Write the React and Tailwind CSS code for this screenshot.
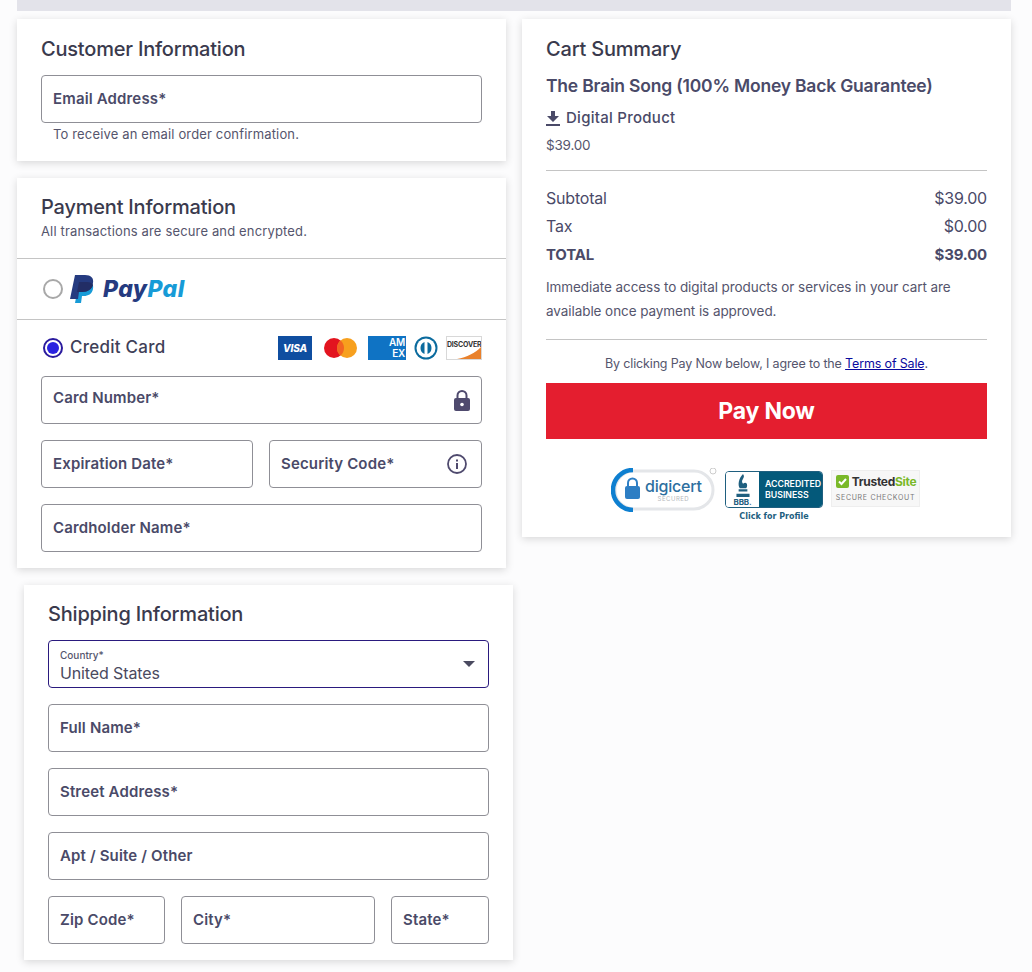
import React from 'react';

const Field = ({ label, className = '', labelClass = '', children }) => (
    <div className={`h-12 border border-[#8f8f96] rounded flex items-center justify-between px-[11px] ${className}`}>
        <span className={`text-[15px] font-semibold text-[#4a4a68] tracking-[0.15px] ${labelClass}`}>{label}</span>
        {children}
    </div>
);

const Radio = ({ checked }) => (
    checked ? (
        <span className="w-5 h-5 rounded-full border-2 border-[#2a1a9e] flex items-center justify-center">
            <span className="w-3 h-3 rounded-full bg-[#2a22e0]"></span>
        </span>
    ) : (
        <span className="w-5 h-5 rounded-full border-2 border-[#a8a8a8]"></span>
    )
);

const PaypalLogo = () => (
    <div className="flex items-center gap-[9px]">
        <svg width="24" height="28" viewBox="0 0 24 28">
            <path d="M9 7h8c4 0 7 2 6 7-1 5-5 7-9 7h-2l-1 7H5z" fill="#179bd7" />
            <path d="M5 0h10c6 0 9 3 8 8-1 6-5 9-11 9H9l-1 7H0z" fill="#253b80" />
            <path d="M9 7h8c3 0 5 1 6 3-1 4-5 7-11 7H7z" fill="#222d65" />
        </svg>
        <span className="text-[23px] font-extrabold italic leading-none tracking-[0.4px] mt-px">
            <span className="text-[#253b80]">Pay</span><span className="text-[#179bd7]">Pal</span>
        </span>
    </div>
);

const CardIcons = () => (
    <div className="flex items-center">
        <div className="w-[34px] h-6 bg-[#0f4ea0] flex items-center justify-center text-white text-[10px] font-extrabold italic">VISA</div>
        <svg className="ml-[11px]" width="35" height="24" viewBox="0 0 35 24">
            <circle cx="11" cy="12" r="10" fill="#e3141f" />
            <circle cx="24" cy="12" r="10" fill="#f7a01e" />
            <path d="M17.5 4.4a10 10 0 0 1 0 15.2a10 10 0 0 1 0-15.2z" fill="#f26522" />
        </svg>
        <div className="ml-[10px] w-[38px] h-6 bg-[#0f73c4] flex flex-col items-end justify-center pr-px text-white text-[10px] font-semibold leading-[11px]">
            <span>AM</span>
            <span>EX</span>
        </div>
        <svg className="ml-2" width="24" height="24" viewBox="0 0 24 24">
            <circle cx="12" cy="12" r="11.5" fill="#0b6b9e" />
            <circle cx="12" cy="12" r="9.500" fill="#fff" />
            <path d="M10.500 6v12a6.500 6.500 0 0 1 0-12zM13.500 6a6.500 6.500 0 0 1 0 12z" fill="#0b6b9e" />
        </svg>
        <div className="ml-2 w-9 h-6 border border-[#d8d8d8] relative overflow-hidden bg-white">
            <svg className="absolute inset-0" width="34" height="22" viewBox="0 0 34 22">
                <path d="M34 10V22H10C20 20 28 16 34 10z" fill="#e9812c" />
            </svg>
            <span className="relative block text-[7px] font-bold leading-[16px] text-center text-[#333]">DISCOVER</span>
        </div>
    </div>
);

const Digicert = () => (
    <div className="w-[106px] h-[44px] relative flex items-center">
        <svg className="absolute inset-0" width="106" height="44" viewBox="0 0 106 44">
            <rect x="4" y="3" width="98" height="38" rx="19" fill="#fff" stroke="#e4e6e9" strokeWidth="3" />
            <path d="M22 2A20 20 0 0 0 22 42" fill="none" stroke="#0e7fd0" strokeWidth="4.500" />
            <circle cx="102" cy="3" r="3" fill="none" stroke="#ccc" />
            <rect x="14" y="18" width="15" height="13" rx="2" fill="#2d7ec4" />
            <path d="M17 18v-3a4.500 4.500 0 0 1 9 0v3" fill="none" stroke="#2d7ec4" strokeWidth="2" />
        </svg>
        <div className="relative ml-[34px] flex flex-col items-center">
            <span className="text-[16px] leading-[17px] font-medium text-[#2d6f9f]">digicert</span>
            <span className="text-[6px] leading-[8px] text-[#b5b8bc] tracking-[0.5px]">SECURED</span>
        </div>
    </div>
);

const Bbb = () => (
    <div className="mt-[3px] flex flex-col items-center">
        <div className="w-[98px] h-[37px] rounded border border-[#1f5f7f] flex overflow-hidden">
            <div className="w-[33px] bg-white flex flex-col items-center justify-end text-[#1f5f7f]">
                <svg width="16" height="24" viewBox="0 0 14 22">
                    <path d="M7 0C10 4 4 5 7 9c3-3 5 1 3 4H4C2 10 3 4 7 0zM3 14h8v2H3zM1 18h12v3H1z" fill="#1f5f7f" />
                </svg>
                <span className="text-[8px] font-bold leading-[9px]">BBB.</span>
            </div>
            <div className="flex-1 bg-[#04597a] flex flex-col justify-center pl-[6px] text-white text-[8.750px] font-semibold leading-[11px] tracking-normal">
                <span>ACCREDITED</span>
                <span>BUSINESS</span>
            </div>
        </div>
        <span className="font-['DejaVu_Sans'] text-[8px] font-bold text-[#1f5f7f] leading-[18px] tracking-normal">Click for Profile</span>
    </div>
);

const TrustedSite = () => (
    <div className="mt-[2px] w-[89px] h-[37px] bg-[#f7f7f7] border border-[#eeeeee] flex flex-col items-center justify-center">
        <div className="flex items-center gap-[3px] pl-px">
            <svg width="13" height="13" viewBox="0 0 13 13">
                <rect width="13" height="13" rx="2" fill="#7ab929" />
                <path d="M3 6.500l2.500 2.500 4.500-5" fill="none" stroke="#fff" strokeWidth="2" />
            </svg>
            <span className="text-[12px] font-bold leading-[14px] text-[#333] tracking-[-0.3px]">Trusted<span className="text-[#7ab929]">Site</span></span>
        </div>
        <span className="text-[7px] leading-[10px] tracking-[0.7px] text-[#777] mt-[4px]">SECURE CHECKOUT</span>
    </div>
);

const Row = ({ label, value, bold }) => (
    <div className={`flex justify-between h-7 items-center text-[#4a4a68] ${bold ? 'text-[15px] font-bold' : 'text-[16px] pb-[2px]'}`}>
        <span>{label}</span>
        <span>{value}</span>
    </div>
);

export default function App() {
    return (
        <div className="w-[1032px] h-[972px] overflow-hidden bg-[#fcfcfd] px-[17px] text-[#4a4a68] font-['Inter','Noto_Sans',sans-serif] tracking-[-0.2px]">
            <div className="w-[994px] h-[11px] bg-[#e3e3ea]"></div>

            <div className="flex gap-4 mt-2 items-start">
                {/* left column */}
                <div className="w-[489px] shrink-0 flex flex-col gap-[17px]">
                    <div className="bg-white shadow-[0_2px_8px_rgba(0,0,0,0.15)] h-[142px] px-6 pt-[18px]">
                        <h2 className="text-[20px] leading-6 font-medium text-[#3a3a4d]">Customer Information</h2>
                        <Field label="Email Address*" className="mt-[14px]" />
                        <p className="ml-3 text-[13px] leading-[22px] text-[#55556d] tracking-[0.15px]">To receive an email order confirmation.</p>
                    </div>

                    <div className="bg-white shadow-[0_2px_8px_rgba(0,0,0,0.15)] h-[390px]">
                        <div className="h-[81px] px-6 pt-[17px] border-b border-[#c4c4c4]">
                            <h2 className="text-[20px] leading-6 font-medium text-[#3a3a4d]">Payment Information</h2>
                            <p className="text-[13px] leading-6 text-[#55556d] tracking-[0.15px]">All transactions are secure and encrypted.</p>
                        </div>
                        <div className="h-[61px] px-[26px] border-b border-[#c4c4c4] flex items-center gap-[7px]">
                            <Radio />
                            <PaypalLogo />
                        </div>
                        <div className="px-6">
                            <div className="h-[56px] flex items-center justify-between">
                                <div className="flex items-center gap-[7px] pl-[2px]">
                                    <Radio checked />
                                    <span className="text-[17px] font-medium text-[#3f3f58] tracking-[0.25px]">Credit Card</span>
                                </div>
                                <CardIcons />
                            </div>
                            <div className="flex flex-col gap-4">
                                <Field label="Card Number*" labelClass="-mt-1">
                                    <svg width="16" height="21" viewBox="0 0 16 21">
                                        <path d="M3.500 8V5.500a4.500 4.500 0 0 1 9 0V8" fill="none" stroke="#4f4a6e" strokeWidth="2" />
                                        <rect y="8" width="16" height="13" rx="2" fill="#4f4a6e" />
                                        <circle cx="8" cy="14.500" r="1.800" fill="#fff" />
                                    </svg>
                                </Field>
                                <div className="grid grid-cols-[212px_213px] gap-4">
                                    <Field label="Expiration Date*" />
                                    <Field label="Security Code*">
                                        <svg className="mr-[3px]" width="20" height="20" viewBox="0 0 20 20">
                                            <circle cx="10" cy="10" r="9" fill="none" stroke="#4f4a6e" strokeWidth="1.800" />
                                            <rect x="9" y="9" width="2" height="6" fill="#4f4a6e" />
                                            <rect x="9" y="5.500" width="2" height="2" fill="#4f4a6e" />
                                        </svg>
                                    </Field>
                                </div>
                                <Field label="Cardholder Name*" />
                            </div>
                        </div>
                    </div>

                    <div className="ml-[7px] w-[489px] bg-white shadow-[0_2px_8px_rgba(0,0,0,0.15)] h-[375px] px-6 pt-[17px]">
                        <h2 className="text-[20px] leading-6 font-medium text-[#3a3a4d]">Shipping Information</h2>
                        <div className="mt-[14px] flex flex-col gap-4">
                            <div className="h-12 border border-[#2a1a7e] rounded px-[11px] flex items-center justify-between">
                                <div className="flex flex-col">
                                    <span className="mt-[5px] text-[10px] leading-3 font-medium text-[#55556d] tracking-normal">Country*</span>
                                    <span className="text-[16px] leading-6 text-[#4a4a60] tracking-[-0.12px]">United States</span>
                                </div>
                                <svg className="mr-[2px]" width="12" height="6" viewBox="0 0 12 6">
                                    <path d="M0 0h12L6 6z" fill="#4a4a60" />
                                </svg>
                            </div>
                            <Field label="Full Name*" />
                            <Field label="Street Address*" />
                            <Field label="Apt / Suite / Other" />
                            <div className="flex gap-4">
                                <Field label="Zip Code*" className="w-[117px]" />
                                <Field label="City*" className="w-[194px]" />
                                <Field label="State*" className="w-[98px]" />
                            </div>
                        </div>
                    </div>
                </div>

                {/* cart summary */}
                <div className="w-[489px] h-[518px] bg-white shadow-[0_2px_8px_rgba(0,0,0,0.15)] px-6 pt-[18px]">
                    <h2 className="text-[20px] leading-6 font-medium text-[#3a3a4d]">Cart Summary</h2>
                    <h3 className="mt-[13px] text-[17.500px] leading-6 font-semibold text-[#4a4a68]">The Brain Song (100% Money Back Guarantee)</h3>
                    <div className="mt-[8px] flex items-center gap-[6px] h-6 text-[15px] font-medium text-[#4a4a68] tracking-[0.27px]">
                        <svg width="14" height="15" viewBox="0 0 14 15">
                            <path d="M5 0h4v5h4L7 11 1 5h4zM0 13h14v2H0z" fill="#4a4a68" />
                        </svg>
                        <span>Digital Product</span>
                    </div>
                    <p className="mt-[3px] text-[13.500px] leading-6 text-[#55556d]">$39.00</p>
                    <div className="mt-[13px] border-t border-[#c4c4c4] pt-[14px]">
                        <Row label="Subtotal" value="$39.00" />
                        <Row label="Tax" value="$0.00" />
                        <Row label="TOTAL" value="$39.00" bold />
                    </div>
                    <p className="mt-[6px] text-[13.500px] leading-6 text-[#55556d] tracking-[-0.07px]">Immediate access to digital products or services in your cart are available once payment is approved.</p>
                    <div className="mt-[16px] border-t border-[#c4c4c4] pt-[14px] text-center text-[12.500px] leading-[20px] text-[#55556d] tracking-[-0.15px]">
                        By clicking Pay Now below, I agree to the <a href="#" className="underline text-[#0a0a9e]">Terms of Sale</a>.
                    </div>
                    <button className="mt-[9px] w-full h-14 bg-[#e41e2f] text-white text-[23px] font-bold">Pay Now</button>
                    <div className="mt-[29px] flex items-start gap-2 pl-[65px]">
                        <Digicert />
                        <Bbb />
                        <TrustedSite />
                    </div>
                </div>
            </div>
        </div>
    );
}
